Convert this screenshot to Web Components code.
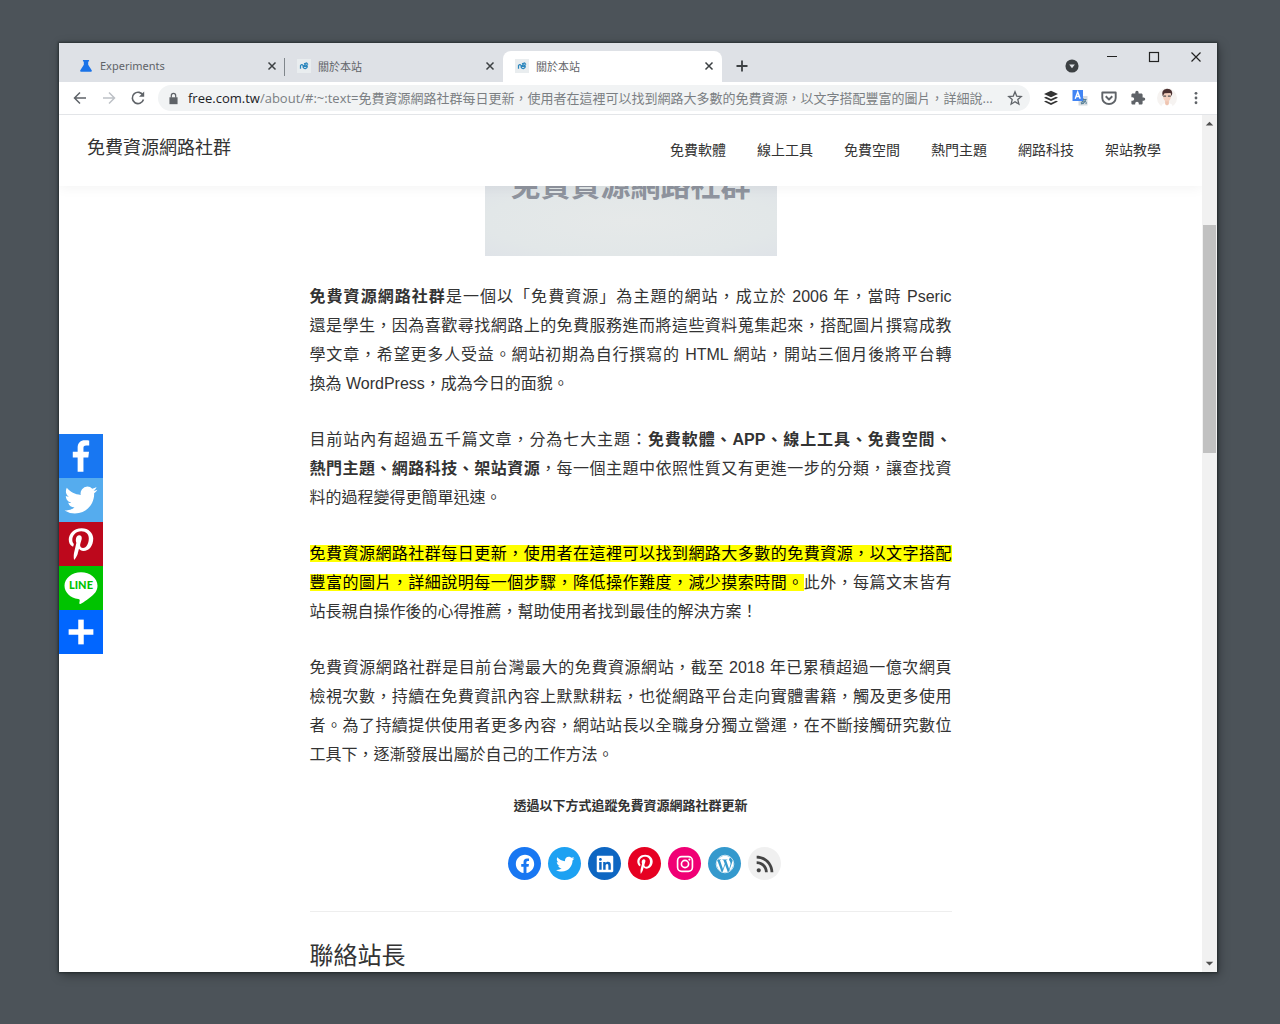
<!DOCTYPE html>
<html lang="zh-Hant">
<head>
<meta charset="utf-8">
<title>關於本站</title>
<style>
html,body{margin:0;height:100%}
body{box-sizing:border-box;display:flex;padding:43px 63px 52px 59px;background:#4c5359;color:#333;font-family:"Liberation Sans","Noto Sans CJK TC",sans-serif;overflow:hidden}
</style>
</head>
<body>
<browser-window></browser-window>
<script>
const P = {
  flask:'<path fill="#1a73e8" d="M4.500 1h7v1.800h-1v3.700l4 6.300c.5.900.1 1.700-.8 1.700H2.300c-.9 0-1.300-.8-.8-1.700l4-6.300V2.800h-1z"/>',
  site:'<rect width="16" height="16" fill="#e9edef"/><path d="M4 11V7.500q1.500-2 3 0V10M7.500 8.500q2-3 4-1 1 2.500-2 3.500-2.500 0-2-2.500h4M8 5.500l3-1 1.500 2" fill="none" stroke="#2b86bd" stroke-width="1.400"/>',
  close:'<path d="M4.500 4.500l7 7M11.500 4.500l-7 7" stroke="#3c4043" stroke-width="1.500"/>',
  plus:'<path d="M8 2.500v11M2.500 8h11" stroke="#3c4043" stroke-width="1.800"/>',
  back:'<path d="M14 8H2.500M8 2.500L2.500 8 8 13.500" fill="none" stroke="#5f6368" stroke-width="1.500"/>',
  forward:'<path d="M2 8h11.500M8 2.500L13.500 8 8 13.500" fill="none" stroke="#bdc1c6" stroke-width="1.500"/>',
  reload:'<path d="M13.200 5.500A5.700 5.700 0 1 0 13.500 9.600" fill="none" stroke="#5f6368" stroke-width="1.600"/><path d="M14.200 1.500v5.200H9z" fill="#5f6368"/>',
  lock:'<path d="M3 6.500h10V15H3z" fill="#5f6368"/><path d="M5.300 7V4.500a2.700 2.700 0 0 1 5.400 0V7" fill="none" stroke="#5f6368" stroke-width="1.500"/>',
  star:'<path d="M8 1.800l1.700 4.300 4.600.4-3.500 3.100 1.100 4.600L8 11.700l-3.900 2.500L5.200 9.600 1.700 6.500l4.600-.4z" fill="none" stroke="#5f6368" stroke-width="1.300"/>',
  buffer:'<path d="M8 .8l7 3.200-7 3.200L1 4zM1 7.700l2-.9 5 2.300 5-2.300 2 .9-7 3.200zM1 11.600l2-.9L8 13l5-2.300 2 .9-7 3.300z"/>',
  translate:'<rect x="6.500" y="6" width="9" height="9.500" fill="#d6dbe0"/><path d="M8.500 9.500h6M11 8v6M13.500 10q-1 4-4 4 -1.500-2 2-3 3.500 0 2.500 3" fill="none" stroke="#547f96"/><rect x=".5" width="10.500" height="11" fill="#4285f4"/><path d="M3.200 8.700L5.700 2l2.500 6.700M4 6.500h3.500" fill="none" stroke="#fff" stroke-width="1.400"/>',
  pocket:'<path d="M1.300 2.500h13.400V8a6.700 6 0 0 1-13.400 0zM4.700 6.300L8 9.500l3.300-3.200" fill="none" stroke="#5f6368" stroke-width="1.900" stroke-linejoin="round"/>',
  puzzle:'<path d="M13.600 7.400h-1V4.700c0-.7-.6-1.300-1.300-1.300H8.600v-1a1.650 1.650 0 0 0-3.300 0v1H2.700c-.7 0-1.300.6-1.300 1.300v2.500h1a1.800 1.800 0 0 1 0 3.600h-1v2.500c0 .7.6 1.300 1.300 1.300h2.500v-1a1.800 1.800 0 0 1 3.600 0v1h2.500c.7 0 1.300-.6 1.300-1.300v-2.600h1a1.650 1.650 0 0 0 0-3.300z" fill="#5f6368"/>',
  avatar:'<circle cx="8" cy="8" r="8" fill="#f6f3f1"/><path d="M3.500 15q0-3 4.500-3t4.500 3q-4.500 2-9 0z" fill="#fff"/><path d="M6.500 10h3v3L8 14l-1.500-1z" fill="#efc4b0"/><ellipse cx="8" cy="6.500" rx="3.200" ry="4.300" fill="#f3cfbe"/><path d="M4.500 6.500Q3 1 8 .5q5.500 0 3.800 6L10.800 4 6 4.200z" fill="#4a3030"/><path d="M5 6.500h2.300M8.700 6.500H11" stroke="#555"/>',
  dots:'<g fill="#5f6368"><circle cx="8" cy="2.600" r="1.600"/><circle cx="8" cy="8" r="1.600"/><circle cx="8" cy="13.400" r="1.600"/></g>',
  search:'<circle cx="8" cy="8" r="7.500" fill="#3c4043"/><path d="M4.800 6.300h6.400L8 10.500z" fill="#dee1e6"/>',
  min:'<path d="M3 7.500h10" stroke="#222"/>',
  max:'<rect x="3.500" y="3.500" width="9" height="9" fill="none" stroke="#222" stroke-width="1.200"/>',
  exit:'<path d="M3.500 3.500l9 9M12.500 3.500l-9 9" stroke="#222" stroke-width="1.200"/>',
  up:'<path d="M4 10l4-4 4 4z" fill="#505050"/>',
  down:'<path d="M4 6l4 4 4-4z" fill="#505050"/>'
};
const P32 = {
  a2aFacebook:'<path fill="#fff" d="M17.780 27.500V17.008h3.522l.527-4.090h-4.050v-2.610c0-1.182.330-1.990 2.023-1.990h2.166V4.660c-.375-.050-1.660-.160-3.155-.160-3.123 0-5.260 1.905-5.260 5.405v3.016h-3.530v4.090h3.530V27.500h4.223z"/>',
  a2aTwitter:'<path fill="#fff" d="M28 8.557a9.913 9.913 0 0 1-2.828.775 4.930 4.930 0 0 0 2.166-2.725 9.738 9.738 0 0 1-3.130 1.194 4.920 4.920 0 0 0-3.593-1.550 4.924 4.924 0 0 0-4.794 6.049c-4.090-.210-7.720-2.170-10.150-5.150a4.942 4.942 0 0 0-.665 2.477c0 1.710.870 3.214 2.190 4.100a4.968 4.968 0 0 1-2.230-.616v.060c0 2.390 1.700 4.380 3.952 4.830-.414.115-.850.174-1.297.174-.318 0-.626-.030-.928-.086a4.935 4.935 0 0 0 4.600 3.420 9.893 9.893 0 0 1-6.114 2.107c-.398 0-.790-.023-1.175-.068a13.953 13.953 0 0 0 7.550 2.213c9.056 0 14.010-7.507 14.010-14.013 0-.213-.005-.426-.015-.637.960-.695 1.795-1.560 2.455-2.550z"/>',
  a2aPinterest:'<path fill="#fff" d="M16.539 4.500c-6.277 0-9.442 4.500-9.442 8.253 0 2.272.860 4.293 2.705 5.046.303.125.574.005.662-.330.061-.231.205-.816.270-1.060.088-.331.053-.447-.191-.736-.532-.627-.873-1.439-.873-2.591 0-3.338 2.498-6.327 6.505-6.327 3.548 0 5.497 2.168 5.497 5.062 0 3.810-1.686 7.025-4.188 7.025-1.382 0-2.416-1.142-2.085-2.545.397-1.674 1.166-3.480 1.166-4.689 0-1.081-.581-1.983-1.782-1.983-1.413 0-2.548 1.462-2.548 3.419 0 1.247.421 2.091.421 2.091l-1.699 7.199c-.505 2.137-.076 4.755-.039 5.019.021.158.223.196.314.077.130-.170 1.813-2.247 2.384-4.324.162-.587.929-3.631.929-3.631.460.876 1.801 1.646 3.227 1.646 4.247 0 7.128-3.871 7.128-9.053.003-3.918-3.317-7.568-8.361-7.568z"/>',
  a2aLine:'<path fill="#fff" d="M28 14.300C28 8.900 22.600 4.500 16 4.500S4 8.900 4 14.300c0 4.800 4.300 8.900 10 9.700.4.100.9.300 1 .6.100.3.100.8 0 1.100l-.2 1c0 .3-.2 1.200 1.100.7s6.900-4.100 9.500-7c1.800-1.900 2.600-3.900 2.600-6.100z"/><text x="16" y="17" text-anchor="middle" font-family="Lato,sans-serif" font-weight="900" font-size="8" fill="#00c300">LINE</text>',
  a2aPlus:'<path fill="#fff" d="M14 7h4v18h-4z"/><path fill="#fff" d="M7 14h18v4H7z"/>'
};
const P24 = {
  facebook:'<path d="M12 2C6.500 2 2 6.500 2 12c0 5 3.700 9.100 8.400 9.900v-7H7.900V12h2.500V9.800c0-2.500 1.500-3.900 3.800-3.900 1.100 0 2.200.2 2.200.2v2.500h-1.300c-1.200 0-1.600.8-1.600 1.600V12h2.800l-.4 2.900h-2.300v7C18.300 21.100 22 17 22 12c0-5.500-4.500-10-10-10z"/>',
  twitter:'<path d="M22.230 5.924c-.736.326-1.527.547-2.357.646.847-.508 1.498-1.312 1.804-2.270-.793.470-1.671.812-2.606.996C18.324 4.498 17.257 4 16.077 4c-2.266 0-4.103 1.837-4.103 4.103 0 .322.036.635.106.935C8.670 8.867 5.647 7.234 3.623 4.751 3.270 5.357 3.067 6.062 3.067 6.814c0 1.424.724 2.679 1.825 3.415-.673-.021-1.305-.206-1.859-.513v.052c0 1.988 1.414 3.647 3.292 4.023-.344.094-.707.144-1.081.144-.264 0-.521-.026-.772-.074.522 1.630 2.038 2.816 3.833 2.850-1.404 1.100-3.174 1.756-5.096 1.756-.331 0-.658-.019-.979-.057 1.816 1.164 3.973 1.843 6.290 1.843 7.547 0 11.675-6.252 11.675-11.675 0-.178-.004-.355-.012-.531.802-.578 1.497-1.301 2.047-2.123z"/>',
  linkedin:'<path d="M19.700 3H4.300C3.582 3 3 3.582 3 4.300v15.400C3 20.418 3.582 21 4.300 21h15.400c.718 0 1.300-.582 1.300-1.300V4.300C21 3.582 20.418 3 19.700 3zM8.339 18.338H5.667v-8.590h2.672v8.590zM7.004 8.574c-.857 0-1.549-.694-1.549-1.548 0-.855.691-1.548 1.549-1.548.854 0 1.547.694 1.547 1.548 0 .855-.693 1.548-1.547 1.548zM18.339 18.338h-2.669v-4.177c0-.996-.017-2.278-1.387-2.278-1.389 0-1.601 1.086-1.601 2.206v4.249h-2.667v-8.590h2.559v1.174h.037c.356-.675 1.227-1.387 2.526-1.387 2.703 0 3.203 1.779 3.203 4.092v4.711z"/>',
  pinterest:'<path d="M12.289 2C6.617 2 3.606 5.648 3.606 9.622c0 1.846 1.025 4.146 2.666 4.878.250.111.381.063.439-.169.044-.175.267-1.029.365-1.428.032-.128.017-.237-.091-.362C6.445 11.911 6.010 10.750 6.010 9.668c0-2.777 2.194-5.464 5.933-5.464 3.230 0 5.490 2.108 5.490 5.122 0 3.407-1.794 5.768-4.130 5.768-1.291 0-2.257-1.021-1.948-2.277.372-1.495 1.089-3.112 1.089-4.191 0-.967-.542-1.775-1.663-1.775-1.319 0-2.379 1.309-2.379 3.059 0 1.115.394 1.869.394 1.869s-1.302 5.279-1.540 6.261c-.405 1.666.053 4.368.094 4.604.021.126.167.169.250.063.129-.165 1.699-2.419 2.142-4.051.158-.590.817-2.995.817-2.995.430.784 1.681 1.446 3.013 1.446 3.963 0 6.822-3.494 6.822-7.833C20.394 5.112 16.849 2 12.289 2"/>',
  instagram:'<g fill="none" stroke="currentColor" stroke-width="1.800"><rect x="3.900" y="3.900" width="16.200" height="16.200" rx="4.500"/><circle cx="12" cy="12" r="3.900"/></g><circle cx="16.800" cy="7.200" r="1.200"/>',
  wordpress:'<path d="M12.158 12.786L9.460 20.625c.806.237 1.657.366 2.540.366 1.047 0 2.051-.181 2.986-.510-.024-.038-.046-.079-.065-.124L12.158 12.786zM3.009 12c0 3.559 2.068 6.634 5.067 8.092L3.788 8.341C3.289 9.459 3.009 10.696 3.009 12zM18.069 11.546c0-1.112-.399-1.881-.741-2.480-.456-.741-.883-1.368-.883-2.109 0-.826.627-1.596 1.510-1.596.040 0 .078.005.116.007C16.472 3.904 14.340 3.009 12 3.009c-3.141 0-5.904 1.612-7.512 4.052.211.007.410.011.579.011.940 0 2.396-.114 2.396-.114.484-.028.541.684.057.741 0 0-.487.057-1.029.085l3.274 9.739 1.968-5.901-1.401-3.838c-.484-.028-.943-.085-.943-.085-.485-.029-.428-.769.057-.741 0 0 1.484.114 2.368.114.940 0 2.397-.114 2.397-.114.485-.028.542.684.057.741 0 0-.488.057-1.029.085l3.249 9.665.897-2.996c.456-1.169.684-2.137.684-2.907zM19.889 7.686c.039.286.060.593.060.924 0 .912-.171 1.938-.684 3.220l-2.746 7.940c2.673-1.558 4.470-4.454 4.470-7.771 0-1.563-.400-3.032-1.100-4.313z"/><circle cx="12" cy="12" r="9.600" fill="none" stroke="currentColor" stroke-width=".8"/>',
  rss:'<path d="M2 8.667V12c5.515 0 10 4.485 10 10h3.333C15.333 14.637 9.363 8.667 2 8.667zM2 2v3.333c9.190 0 16.667 7.477 16.667 16.667H22C22 10.955 13.045 2 2 2zM4.500 17C3.118 17 2 18.120 2 19.500S3.118 22 4.500 22 7 20.880 7 19.500 5.882 17 4.500 17z"/>'
};
const base = '*{box-sizing:border-box}button{font:inherit;color:inherit;border:0;background:none;padding:0;display:flex;align-items:center;justify-content:center}a{color:inherit;text-decoration:none}';
function define(name, css, html){
  customElements.define(name, class extends HTMLElement{
    constructor(){
      super();
      const t = document.createElement('template');
      t.innerHTML = '<style>'+base+css+'</style>'+html;
      this.attachShadow({mode:'open'}).append(t.content.cloneNode(true));
    }
  });
}
customElements.define('ui-icon', class extends HTMLElement{
  connectedCallback(){
    if(this.shadowRoot) return;
    const n = this.getAttribute('name'), s = this.getAttribute('size')||16;
    const box = P[n]?16:P32[n]?32:24;
    this.attachShadow({mode:'open'}).innerHTML =
      `<style>:host{display:block;flex:none;width:${s}px;height:${s}px}svg{display:block}</style><svg width="${s}" height="${s}" viewBox="0 0 ${box} ${box}" fill="currentColor" aria-hidden="true">${P[n]||P32[n]||P24[n]}</svg>`;
  }
});
define('browser-tab',
  `:host{display:flex;align-items:center;width:218px;height:31px;padding:0 5px 2px 12px;font:11px "Noto Sans","Noto Sans CJK TC",sans-serif;color:#5f6368}
  :host([line]){background:linear-gradient(#80868b,#80868b) right center/1px 18px no-repeat}
  :host([active]){width:219px;background:#fff;border-radius:8px 8px 0 0}
  .t{flex:1;padding-left:7px;white-space:nowrap}button{width:16px;height:16px}`,
  '<slot name="icon"></slot><span class="t"><slot></slot></span><button aria-label="關閉分頁"><ui-icon name="close" size="16"></ui-icon></button>');
define('tab-strip',
  `:host{display:flex;align-items:flex-end;height:39px;padding-left:8px;background:#dee1e6}
  .new{width:28px;height:31px;margin-left:6px;padding-bottom:2px}.sp{flex:1}.search{height:31px;margin-right:12px;padding-bottom:2px}
  .win{align-self:flex-start;display:flex}.win button{width:42px;height:28px}`,
  `<browser-tab line><ui-icon slot="icon" name="flask" size="14"></ui-icon>Experiments</browser-tab>
  <browser-tab><ui-icon slot="icon" name="site" size="14"></ui-icon>關於本站</browser-tab>
  <browser-tab active><ui-icon slot="icon" name="site" size="14"></ui-icon>關於本站</browser-tab>
  <button class="new" aria-label="新分頁"><ui-icon name="plus"></ui-icon></button><span class="sp"></span>
  <button class="search" aria-label="搜尋分頁"><ui-icon name="search" size="14"></ui-icon></button>
  <div class="win"><button aria-label="最小化"><ui-icon name="min"></ui-icon></button><button aria-label="最大化"><ui-icon name="max"></ui-icon></button><button aria-label="關閉"><ui-icon name="exit"></ui-icon></button></div>`);
define('browser-toolbar',
  `:host{display:flex;align-items:center;height:33px;padding:0 7px 0 6px;background:#fff;border-bottom:1px solid #e3e5e8}
  button{width:29px;height:28px}
  .omni{flex:1;min-width:0;display:flex;align-items:center;height:26px;margin:0 6px 0 6px;padding-left:9px;border-radius:13px;background:#f1f3f4;font:13px/20px "Open Sans","Noto Sans CJK TC",sans-serif}
  .url{flex:1;min-width:0;display:flex;align-items:baseline;padding-left:8px}
  label{color:#202124}
  input{flex:1;min-width:0;border:0;outline:0;padding:0;margin:0;background:none;font:inherit;color:#7b7f83;text-overflow:ellipsis}
  .star{width:30px}`,
  `<button aria-label="上一頁"><ui-icon name="back"></ui-icon></button><button aria-label="下一頁"><ui-icon name="forward"></ui-icon></button><button aria-label="重新載入"><ui-icon name="reload"></ui-icon></button>
  <div class="omni"><ui-icon name="lock" size="13"></ui-icon><div class="url"><label for="url">free.com.tw</label><input id="url" value="/about/#:~:text=免費資源網路社群每日更新，使用者在這裡可以找到網路大多數的免費資源，以文字搭配豐富的圖片，詳細說..."></div><button class="star" aria-label="加入書籤"><ui-icon name="star"></ui-icon></button></div>
  <button aria-label="Buffer"><ui-icon name="buffer"></ui-icon></button><button aria-label="翻譯"><ui-icon name="translate"></ui-icon></button><button aria-label="Pocket"><ui-icon name="pocket"></ui-icon></button><button aria-label="擴充功能"><ui-icon name="puzzle"></ui-icon></button><button aria-label="個人資料"><ui-icon name="avatar" size="20"></ui-icon></button><button aria-label="選單"><ui-icon name="dots" size="14"></ui-icon></button>`);
define('site-header',
  `:host{display:flex;justify-content:space-between;align-items:center;flex:none;height:71px;padding:0 41px 0 28px;background:#fff;box-shadow:0 2px 12px rgba(0,0,0,.05);position:relative;z-index:1}
  .logo{font-size:18px;line-height:26px;padding-bottom:6px}nav{display:flex;gap:31px;padding-bottom:2px;font-size:14px;line-height:20px}`,
  '<a class="logo" href="#">免費資源網路社群</a><nav><a href="#">免費軟體</a><a href="#">線上工具</a><a href="#">免費空間</a><a href="#">熱門主題</a><a href="#">網路科技</a><a href="#">架站教學</a></nav>');
define('share-bar',
  `:host{position:absolute;left:0;top:319px;z-index:2;display:flex;flex-direction:column}
  a{display:block}.f{background:#1877f2}.t{background:#55acee}.p{background:#bd081c}.l{background:#00c300}.m{background:#0166ff}`,
  ['f Facebook','t Twitter','p Pinterest','l Line','m Plus'].map(s=>{const [c,n]=s.split(' ');return `<a class="${c}" href="#" aria-label="${n}"><ui-icon name="a2a${n}" size="44"></ui-icon></a>`}).join(''));
define('social-links',
  `:host{display:flex;justify-content:center;gap:7px;padding-left:28px;color:#fff}
  a{display:flex;align-items:center;justify-content:center;width:33px;height:33px;border-radius:50%}`,
  [['facebook','#1877f2'],['twitter','#1da1f2'],['linkedin','#0d66c2'],['pinterest','#e60122'],['instagram','#f00075'],['wordpress','#3499cd'],['rss','#f0f0f0;color:#444']].map(([n,c])=>`<a href="#" aria-label="${n}" style="background:${c}"><ui-icon name="${n}" size="${n==='rss'?20:22}"></ui-icon></a>`).join(''));
define('about-article',
  `:host{display:block;width:100%;max-width:642px;margin:0 auto}
  figure{display:flex;flex-direction:column;align-items:center;width:292px;height:70px;margin:0 auto 26px;overflow:hidden;background:radial-gradient(ellipse at 50% 50%,#e6e9e9,#e2e7e8 70%,#dfe3e8)}
  figcaption{margin-top:-20px;font-size:30px;line-height:40px;font-weight:700;color:#8f949e;white-space:nowrap}
  p{margin:0 0 27px;font-size:16px;line-height:29px}
  .row{display:block;text-align:justify;text-align-last:justify}
  mark{background:#ff0;color:#000}
  h4{margin:27px 0 31px;font-size:13px;line-height:20px;text-align:center}
  hr{border:0;border-top:1px solid #eee;margin:31px 0 26px}
  h2{margin:0;font-size:24px;line-height:36px;font-weight:400}`,
  `<figure><figcaption>免費資源網路社群</figcaption></figure>
  <p><span class="row"><strong>免費資源網路社群</strong>是一個以「免費資源」為主題的網站，成立於 2006 年，當時 Pseric</span>
  <span class="row">還是學生，因為喜歡尋找網路上的免費服務進而將這些資料蒐集起來，搭配圖片撰寫成教</span>
  <span class="row">學文章，希望更多人受益。網站初期為自行撰寫的 HTML 網站，開站三個月後將平台轉</span>換為 WordPress，成為今日的面貌。</p>
  <p><span class="row">目前站內有超過五千篇文章，分為七大主題：<strong>免費軟體、APP、線上工具、免費空間、</strong></span>
  <span class="row"><strong>熱門主題、網路科技、架站資源</strong>，每一個主題中依照性質又有更進一步的分類，讓查找資</span>料的過程變得更簡單迅速。</p>
  <p><span class="row"><mark>免費資源網路社群每日更新，使用者在這裡可以找到網路大多數的免費資源，以文字搭配</mark></span>
  <span class="row"><mark>豐富的圖片，詳細說明每一個步驟，降低操作難度，減少摸索時間。</mark>此外，每篇文末皆有</span>站長親自操作後的心得推薦，幫助使用者找到最佳的解決方案！</p>
  <p><span class="row">免費資源網路社群是目前台灣最大的免費資源網站，截至 2018 年已累積超過一億次網頁</span>
  <span class="row">檢視次數，持續在免費資訊內容上默默耕耘，也從網路平台走向實體書籍，觸及更多使用</span>
  <span class="row">者。為了持續提供使用者更多內容，網站站長以全職身分獨立營運，在不斷接觸研究數位</span>工具下，逐漸發展出屬於自己的工作方法。</p>
  <h4>透過以下方式追蹤免費資源網路社群更新</h4>
  <social-links></social-links>
  <hr>
  <h2>聯絡站長</h2>`);
define('scroll-bar',
  `:host{display:flex;flex-direction:column;align-items:center;width:15px;background:#f1f1f1}
  button{width:15px;height:17px}.track{flex:1;align-self:stretch;display:flex;flex-direction:column;padding:0 1px}
  .a{flex:93}.thumb{flex:228;background:#c1c1c1}.b{flex:502}`,
  '<button aria-label="向上捲動"><ui-icon name="up" size="15"></ui-icon></button><div class="track"><div class="a"></div><div class="thumb"></div><div class="b"></div></div><button aria-label="向下捲動"><ui-icon name="down" size="15"></ui-icon></button>');
define('browser-window',
  `:host{flex:1;min-width:0;display:flex;flex-direction:column;background:#fff;box-shadow:0 0 2px 1px rgba(20,28,28,.6),2px 3px 10px rgba(0,0,0,.35)}
  .view{flex:1;min-height:0;display:flex}
  main{flex:1;min-width:0;position:relative;display:flex;flex-direction:column;overflow:hidden}`,
  '<tab-strip></tab-strip><browser-toolbar></browser-toolbar><div class="view"><main><site-header></site-header><share-bar></share-bar><about-article></about-article></main><scroll-bar></scroll-bar></div>');
</script>
</body>
</html>
